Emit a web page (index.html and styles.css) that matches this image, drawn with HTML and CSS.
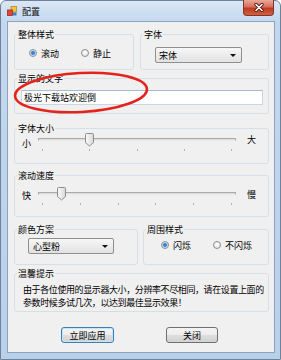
FILE: index.html
```html
<!DOCTYPE html>
<html lang="zh-CN">
<head>
    <meta charset="UTF-8">
    <title>配置</title>
    <link rel="stylesheet" href="styles.css">
</head>
<body>
    <div class="window">
        <div class="titlebar">
            <svg class="app-icon" viewBox="0 0 10 10">
                <rect x="4" y="0.5" width="5.5" height="5.5" fill="#f4c23c" stroke="#b88a1a" stroke-width="0.8"/>
                <rect x="0.5" y="4" width="5" height="5.5" fill="#e2463a" stroke="#a02a22" stroke-width="0.8"/>
                <rect x="6" y="6.5" width="3.5" height="3" fill="#3f7cc8"/>
            </svg>
            <span class="title">配置</span>
            <div class="close-btn">
                <svg width="10" height="9" viewBox="0 0 10 9">
                    <path d="M2 1.5l6 6M8 1.5l-6 6" stroke="#4a1a12" stroke-width="3.2" stroke-linecap="round"/>
                    <path d="M2 1.5l6 6M8 1.5l-6 6" stroke="#fff" stroke-width="1.6" stroke-linecap="round"/>
                </svg>
            </div>
        </div>

        <div class="client">
            <div class="row">
                <fieldset class="group group-style">
                    <legend>整体样式</legend>
                    <div class="radios style-body">
                        <label class="radio"><span class="dot checked"></span>滚动</label>
                        <label class="radio"><span class="dot"></span>静止</label>
                    </div>
                </fieldset>
                <fieldset class="group group-font">
                    <legend>字体</legend>
                    <div class="font-body">
                        <div class="combo combo-font"><span>宋体</span><i class="arrow"></i></div>
                    </div>
                </fieldset>
            </div>

            <fieldset class="group group-text">
                <legend>显示的文字</legend>
                <div class="text-body">
                    <input class="textbox" type="text" value="极光下载站欢迎倒">
                </div>
            </fieldset>

            <fieldset class="group group-size">
                <legend>字体大小</legend>
                <div class="slider-row size-body">
                    <span class="lbl-min">小</span>
                    <div class="slider">
                        <svg class="thumb" style="left: 47px" width="9" height="14" viewBox="0 0 9 14">
                            <defs>
                                <linearGradient id="tg1" x1="0" x2="1">
                                    <stop offset="0" stop-color="#fbfbfb"/>
                                    <stop offset="1" stop-color="#d8d8d8"/>
                                </linearGradient>
                            </defs>
                            <path d="M1.5 .5h6a1 1 0 0 1 1 1v8l-4 3.5-4-3.5v-8a1 1 0 0 1 1-1z" fill="url(#tg1)" stroke="#8c8c8c"/>
                        </svg>
                        <div class="track"></div>
                        <div class="ticks"><i></i><i></i><i></i><i></i><i></i></div>
                    </div>
                    <span class="lbl-max">大</span>
                </div>
            </fieldset>

            <fieldset class="group group-speed">
                <legend>滚动速度</legend>
                <div class="slider-row speed-body">
                    <span class="lbl-min">快</span>
                    <div class="slider">
                        <svg class="thumb" style="left: 19px" width="9" height="14" viewBox="0 0 9 14">
                            <path d="M1.5 .5h6a1 1 0 0 1 1 1v8l-4 3.5-4-3.5v-8a1 1 0 0 1 1-1z" fill="url(#tg1)" stroke="#8c8c8c"/>
                        </svg>
                        <div class="track"></div>
                        <div class="ticks"><i></i><i></i><i></i><i></i><i></i><i></i></div>
                    </div>
                    <span class="lbl-max">慢</span>
                </div>
            </fieldset>

            <div class="row row-color">
                <fieldset class="group group-color">
                    <legend>颜色方案</legend>
                    <div class="color-body">
                        <div class="combo combo-color"><span>心型粉</span><i class="arrow"></i></div>
                    </div>
                </fieldset>
                <fieldset class="group group-blink">
                    <legend>周围样式</legend>
                    <div class="radios blink-body">
                        <label class="radio"><span class="dot checked"></span>闪烁</label>
                        <label class="radio"><span class="dot"></span>不闪烁</label>
                    </div>
                </fieldset>
            </div>

            <fieldset class="group group-tip">
                <legend>温馨提示</legend>
                <p class="tip">由于各位使用的显示器大小，分辨率不尽相同，请在设置上面的<br>参数时候多试几次，以达到最佳显示效果！</p>
            </fieldset>

            <div class="buttons">
                <button class="btn btn-default">立即应用</button>
                <button class="btn">关闭</button>
            </div>
        </div>

        <!-- red hand-drawn circle around the text box -->
        <svg class="mark" width="145" height="50" viewBox="0 0 145 50">
            <ellipse cx="71" cy="24.5" rx="66" ry="19.5" transform="rotate(-3 71 24.5)" fill="none" stroke="#e4231c" stroke-width="2.6"/>
        </svg>
    </div>
</body>
</html>
```

FILE: styles.css
```css
body {
    margin: 0;
    background: #fff;
    font-family: "Noto Sans CJK SC", "Noto Sans", sans-serif;
    font-size: 9px;
    line-height: 11px;
    color: #000;
}

.window {
    position: relative;
    box-sizing: border-box;
    width: 281px;
    height: 360px;
    border: 1px solid #6e829b;
    border-radius: 6px 6px 0 0;
    padding: 0 5px 6px 6px;
    background: linear-gradient(#dae7f5, #c3d8ee 21px, #b9d0e9);
}

/* title bar */
.titlebar {
    display: flex;
    align-items: center;
    height: 20px;
}

.app-icon {
    width: 10px;
    height: 10px;
}

.title {
    margin-left: 5px;
    color: #111;
}

.close-btn {
    align-self: flex-start;
    margin: -1px 1px 0 auto;
    box-sizing: border-box;
    width: 31px;
    height: 16px;
    border: 1px solid #83352a;
    border-top: none;
    border-radius: 0 0 4px 4px;
    background: linear-gradient(#e9a999, #d5705b 45%, #c03a22 55%, #d0613f);
    display: flex;
    align-items: center;
    justify-content: center;
}

/* client area */
.client {
    box-sizing: border-box;
    height: 332px;
    border: 1px solid #8ba3be;
    background: #f0f0f0;
    padding: 7px 5px 0 6px;
}

.row {
    display: flex;
    gap: 6px;
}

.group {
    box-sizing: border-box;
    margin: 0;
    padding: 0;
    min-width: 0;
    border: 1px solid #d5dfe5;
    border-radius: 3px;
}

.group legend {
    margin-left: 2px;
    padding: 0 1px;
    line-height: 11px;
}

.group-style { width: 120px; height: 41px; }
.group-font { flex: 1; height: 41px; }
.group-text { margin-top: 3px; height: 41px; }
.group-size { margin-top: 9px; height: 41px; }
.group-speed { margin-top: 6px; height: 47px; }
.row-color { margin-top: 7px; gap: 5px; }
.group-color { width: 124px; height: 41px; }
.group-blink { flex: 1; height: 41px; }
.group-tip { margin-top: 3px; height: 44px; }

/* radio buttons */
.radios {
    display: flex;
    align-items: center;
    gap: 22px;
    height: 12px;
}

.style-body { padding: 7px 0 0 14px; }
.blink-body { padding: 4px 0 0 17px; }

.radio {
    display: flex;
    align-items: center;
    gap: 4px;
}

.dot {
    box-sizing: border-box;
    width: 8px;
    height: 8px;
    border: 1px solid #8f8f8f;
    border-radius: 50%;
    background: radial-gradient(circle at 50% 40%, #fff, #dedede);
}

.dot.checked {
    background: radial-gradient(circle, #2a76c8 0, #3f8ad6 1.5px, #b9d7f2 2.4px, #f2f2f2 3.4px);
}

/* combo boxes */
.font-body { padding: 7px 0 0 14px; }
.color-body { padding: 3px 0 0 13px; }

.combo {
    box-sizing: border-box;
    display: flex;
    align-items: center;
    height: 16px;
    padding-left: 3px;
    border: 1px solid #8e8f8f;
    border-radius: 2px;
    background: linear-gradient(#f7f7f7, #ececec 50%, #e2e2e2);
}

.combo-font { width: 87px; }
.combo-color { width: 86px; padding-left: 4px; }

.arrow {
    margin: 0 5px 0 auto;
    border-left: 3px solid transparent;
    border-right: 3px solid transparent;
    border-top: 3px solid #111;
}

/* text box */
.text-body { padding: 6px 0 0 6px; }

.textbox {
    box-sizing: border-box;
    display: block;
    width: 242px;
    height: 15px;
    margin: 0;
    padding: 0 0 0 2px;
    border: 1px solid #c8d6e6;
    border-top-color: #a6bbd4;
    background: #fff;
    font: inherit;
    color: #000;
}

/* track bars */
.slider-row {
    display: flex;
    align-items: flex-start;
    padding-left: 7px;
}

.size-body { margin-top: -1px; }
.speed-body { padding-top: 6px; }

.lbl-min { margin: 5px 7px 0 0; }
.lbl-max { margin: 1px 0 0 11px; }
.speed-body .lbl-min { margin-top: 3px; }
.speed-body .lbl-max { margin-top: 2px; }

.slider {
    position: relative;
    width: 198px;
}

.thumb {
    position: absolute;
    top: 0;
}

.track {
    box-sizing: border-box;
    height: 3px;
    margin-top: 5px;
    border: 1px solid #a9a9a9;
    border-bottom-color: #e9e9e9;
    background: #dedede;
}

.ticks {
    display: flex;
    justify-content: space-between;
    margin-top: 8px;
    padding: 0 4px;
}

.ticks i {
    width: 1px;
    height: 2px;
    background: #b0b0b0;
}

/* tip text */
.tip {
    margin: 0;
    padding: 4px 0 0 8px;
    line-height: 13px;
    letter-spacing: -0.4px;
    white-space: nowrap;
}

/* buttons */
.buttons {
    display: flex;
    gap: 52px;
    margin-top: 15px;
    padding-left: 47px;
}

.btn {
    box-sizing: border-box;
    width: 52px;
    height: 16px;
    margin: 0;
    padding: 0;
    border: 1px solid #707070;
    border-radius: 3px;
    background: linear-gradient(#f4f4f4, #ececec 50%, #dedede 50%, #d2d2d2);
    font: inherit;
    color: #000;
}

.btn-default {
    width: 53px;
    border-color: #3c7fb1;
    box-shadow: inset 0 0 0 1px #c4e5f8;
}

.mark {
    position: absolute;
    left: 9px;
    top: 67px;
}
```
